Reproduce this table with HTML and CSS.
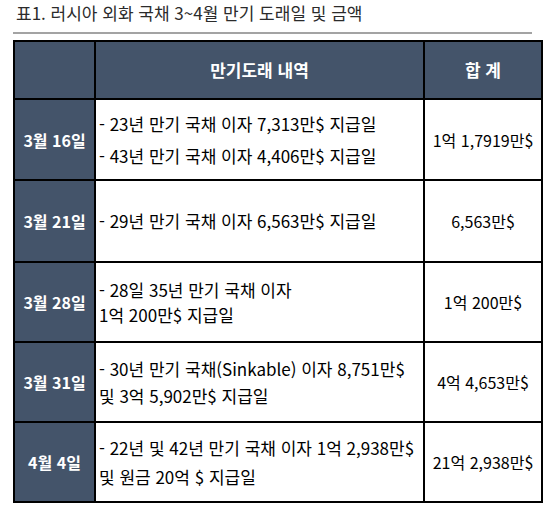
FILE: index.html
```html
<!DOCTYPE html>
<html lang="ko">
<head>
<meta charset="utf-8">
<link rel="stylesheet" href="styles.css">
</head>
<body>
<div class="page">
  <div class="title">표1. 러시아 외화 국채 3~4월 만기 도래일 및 금액</div>
  <div class="rule"></div>
  <div class="table">
    <div class="cell head"></div>
    <div class="cell head center">만기도래 내역</div>
    <div class="cell head center">합 계</div>

    <div class="cell date">3월 16일</div>
    <div class="cell desc gap-a"><div>- 23년 만기 국채 이자 7,313만$ 지급일</div><div>- 43년 만기 국채 이자 4,406만$ 지급일</div></div>
    <div class="cell total">1억 1,7919만$</div>

    <div class="cell date">3월 21일</div>
    <div class="cell desc"><div>- 29년 만기 국채 이자 6,563만$ 지급일</div></div>
    <div class="cell total">6,563만$</div>

    <div class="cell date">3월 28일</div>
    <div class="cell desc gap-b"><div>- 28일 35년 만기 국채 이자</div><div>1억 200만$ 지급일</div></div>
    <div class="cell total">1억 200만$</div>

    <div class="cell date">3월 31일</div>
    <div class="cell desc gap-c"><div>- 30년 만기 국채(Sinkable) 이자 8,751만$</div><div>및 3억 5,902만$ 지급일</div></div>
    <div class="cell total">4억 4,653만$</div>

    <div class="cell date">4월 4일</div>
    <div class="cell desc gap-d"><div>- 22년 및 42년 만기 국채 이자 1억 2,938만$</div><div>및 원금 20억 $ 지급일</div></div>
    <div class="cell total">21억 2,938만$</div>
  </div>
</div>
</body>
</html>
```
FILE: styles.css
```css
html, body {
  margin: 0;
  padding: 0;
  background: #fff;
}
body {
  font-family: "Noto Sans CJK KR", "Noto Sans", sans-serif;
  color: #111;
}
.page {
  width: 550px;
  height: 510px;
}
.title {
  padding: 1px 0 0 16px;
  height: 28px;
  line-height: 24px;
  font-size: 17px;
  color: #2b2b2b;
  box-sizing: border-box;
}
.rule {
  margin: 4px 0 0 13px;
  width: 519px;
  height: 2px;
  background: #a3a3a3;
}
.table {
  margin: 6px 0 0 13px;
  width: 530px;
  box-sizing: border-box;
  border: 2px solid #000;
  background: #000;
  display: grid;
  grid-template-columns: 79px 327px 116px;
  grid-template-rows: 56px 79px 80px 78px 78px 78px;
  gap: 2px;
}
.cell {
  background: #fff;
  display: flex;
  flex-direction: column;
  justify-content: center;
  font-size: 16px;
  line-height: 22px;
}
.head {
  background: #44546a;
  color: #fff;
  font-weight: bold;
  font-size: 17px;
}
.center {
  align-items: center;
}
.date {
  background: #44546a;
  color: #fff;
  font-weight: bold;
  align-items: center;
}
.desc {
  padding-left: 3px;
  color: #000;
  font-size: 17px;
}
.total {
  align-items: center;
  color: #000;
}
.gap-a { gap: 10px; }
.gap-b { gap: 3px; }
.gap-c { gap: 5px; }
.gap-d { gap: 7px; }
```
